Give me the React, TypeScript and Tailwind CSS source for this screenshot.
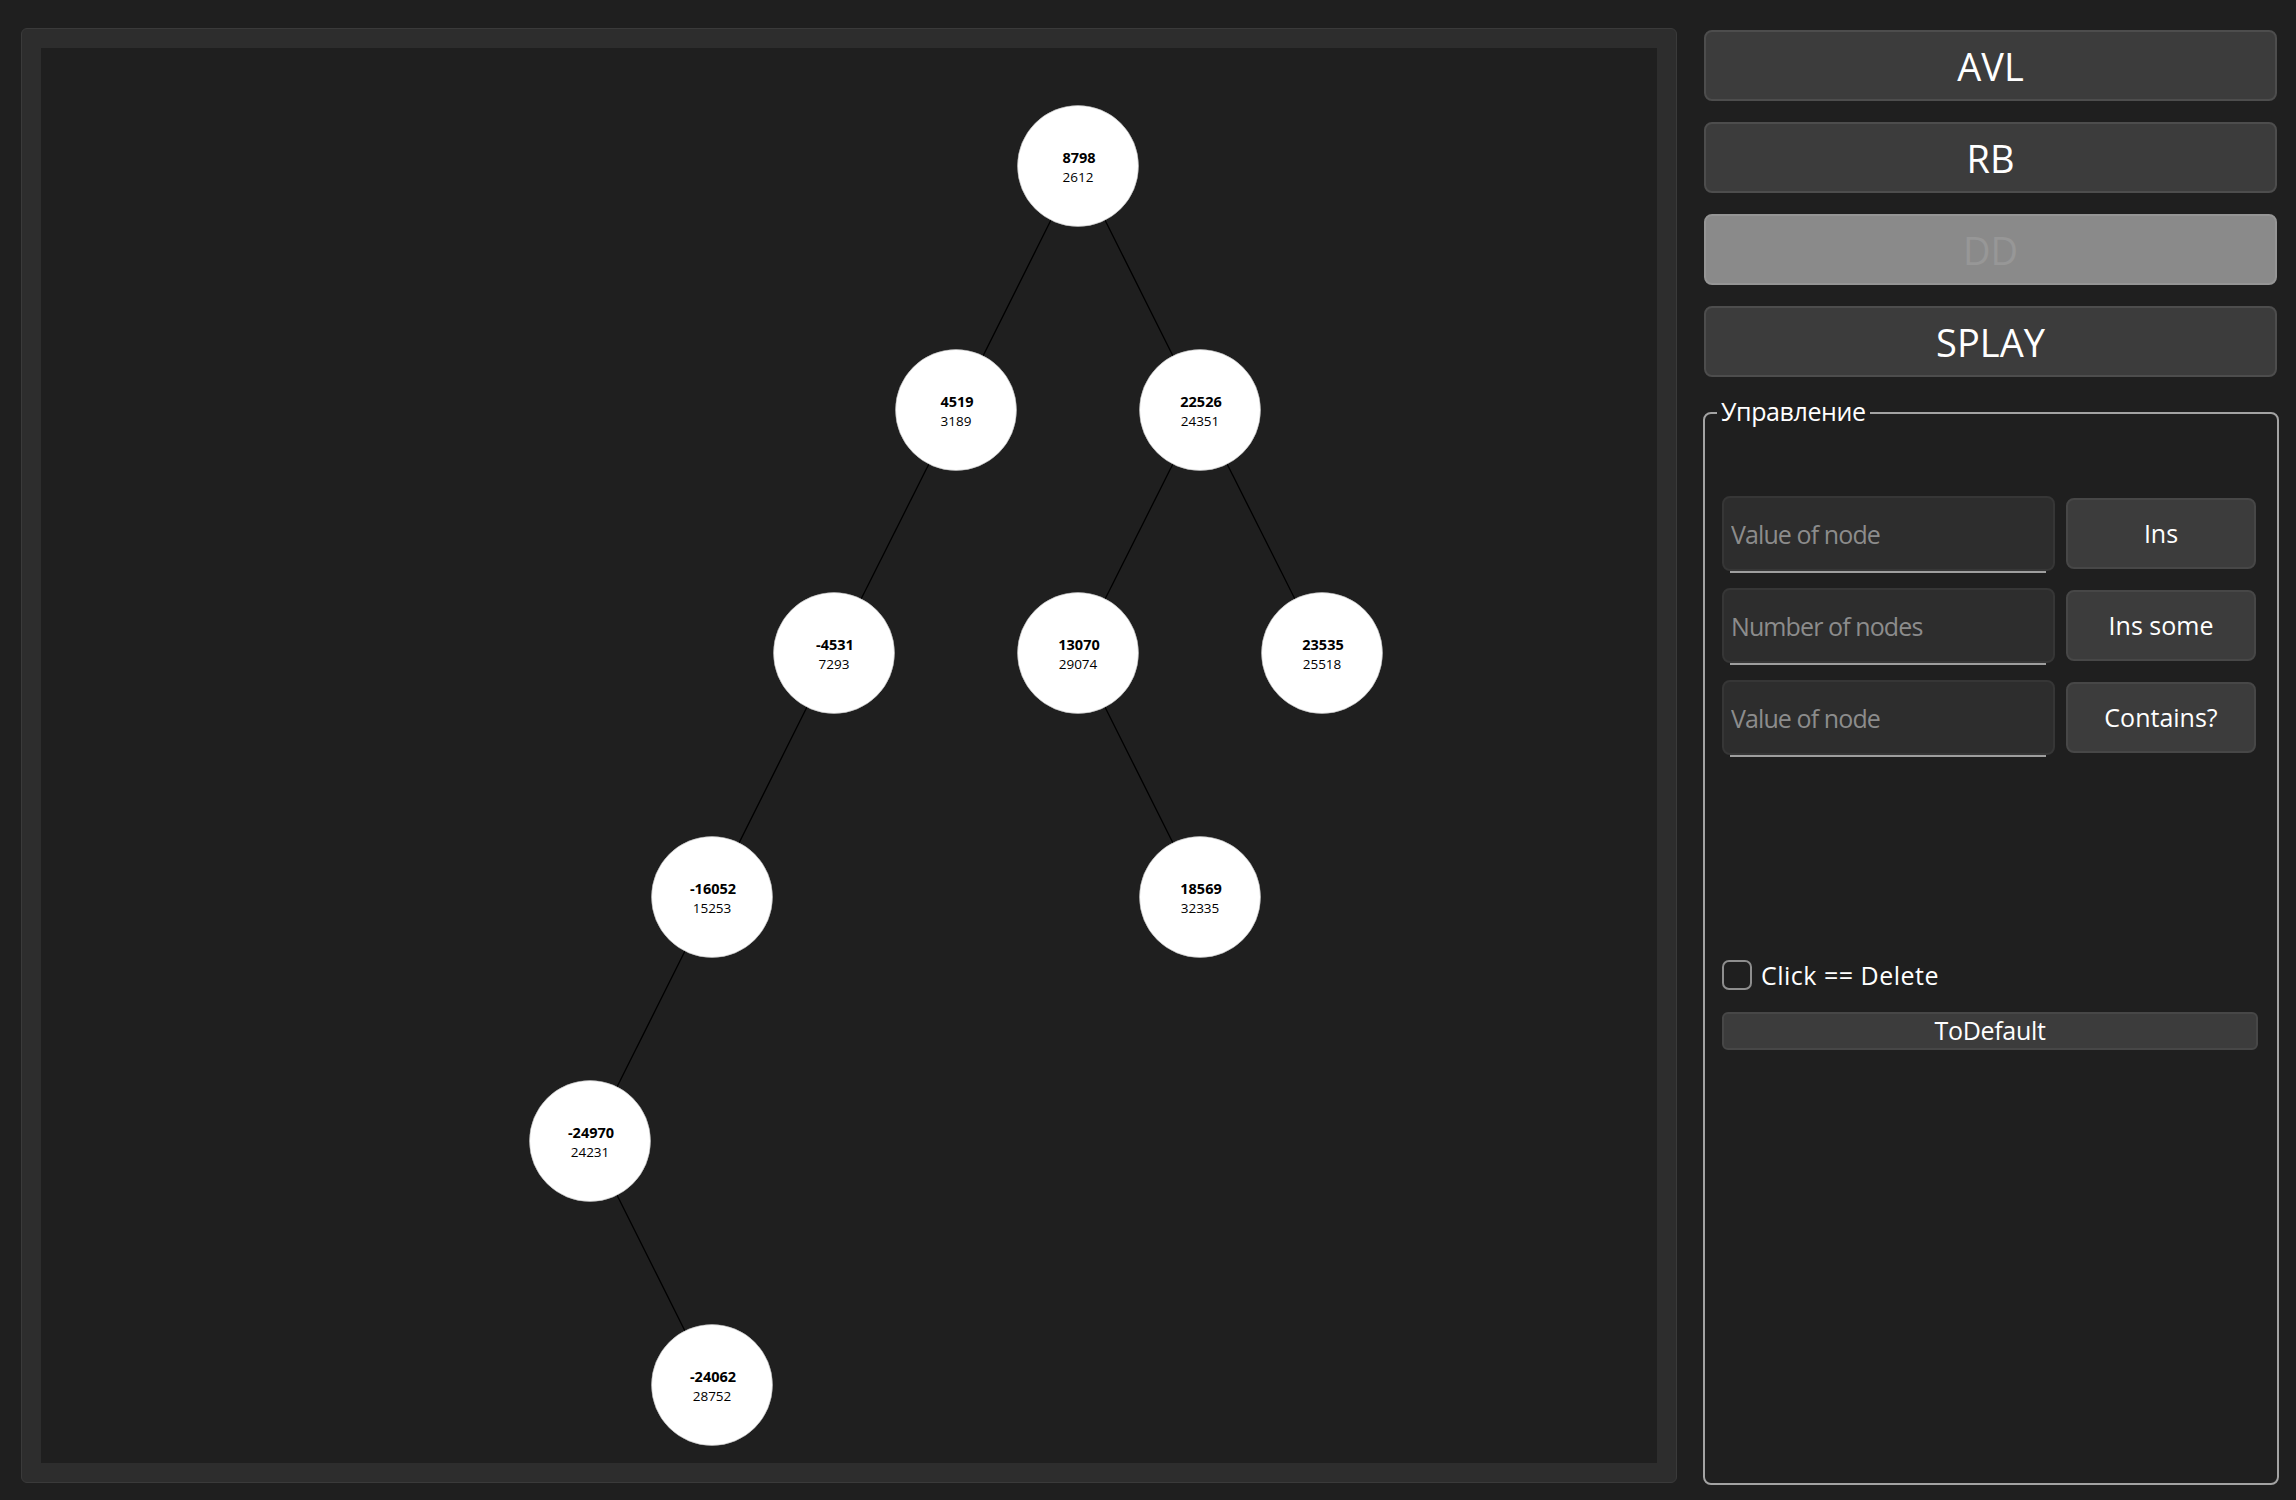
import React from "react";

type N = { id: string; a: string; b: string; x: number; y: number };

const OX = 41;
const OY = 48;

const nodes: N[] = [
  { id: "r", a: "8798", b: "2612", x: 1078, y: 166 },
  { id: "l", a: "4519", b: "3189", x: 956, y: 410 },
  { id: "rr", a: "22526", b: "24351", x: 1200, y: 410 },
  { id: "ll", a: "-4531", b: "7293", x: 834, y: 653 },
  { id: "rl", a: "13070", b: "29074", x: 1078, y: 653 },
  { id: "rrr", a: "23535", b: "25518", x: 1322, y: 653 },
  { id: "lll", a: "-16052", b: "15253", x: 712, y: 897 },
  { id: "rlr", a: "18569", b: "32335", x: 1200, y: 897 },
  { id: "llll", a: "-24970", b: "24231", x: 590, y: 1141 },
  { id: "lllll", a: "-24062", b: "28752", x: 712, y: 1385 },
];

const edges: [string, string][] = [
  ["r", "l"],
  ["r", "rr"],
  ["l", "ll"],
  ["rr", "rl"],
  ["rr", "rrr"],
  ["ll", "lll"],
  ["rl", "rlr"],
  ["lll", "llll"],
  ["llll", "lllll"],
];

const byId = (id: string) => nodes.find((n) => n.id === id)!;

function Tree() {
  return (
    <svg width="1616" height="1415" className="block">
      {edges.map(([p, c]) => {
        const a = byId(p);
        const b = byId(c);
        return (
          <line
            key={p + c}
            x1={a.x - OX}
            y1={a.y - OY}
            x2={b.x - OX}
            y2={b.y - OY}
            stroke="#000"
            strokeWidth={1.3}
          />
        );
      })}
      {nodes.map((n) => (
        <g key={n.id}>
          <circle cx={n.x - OX} cy={n.y - OY} r={60.5} fill="#ffffff" stroke="#bdbdbd" strokeWidth={0.6} />
          <text
            x={n.x - OX + 1}
            y={n.y - OY - 9}
            textAnchor="middle"
            dominantBaseline="central"
            fontFamily="'Open Sans', sans-serif"
            fontWeight={700}
            fontSize={14.5}
            fill="#000"
          >
            {n.a}
          </text>
          <text
            x={n.x - OX}
            y={n.y - OY + 11}
            textAnchor="middle"
            dominantBaseline="central"
            fontFamily="'Open Sans', sans-serif"
            fontWeight={400}
            fontSize={13.5}
            fill="#000"
          >
            {n.b}
          </text>
        </g>
      ))}
    </svg>
  );
}

function BigButton({ label, disabled }: { label: string; disabled?: boolean }) {
  return (
    <div
      className={
        disabled
          ? "ml-[1px] mr-[2px] h-[71px] rounded-[8px] border-2 border-[#959595] bg-[#8a8a8a] flex items-center justify-center text-[38px] text-[#979797]"
          : "ml-[1px] mr-[2px] h-[71px] rounded-[8px] border-2 border-[#4d4d4d] bg-[#3c3c3c] flex items-center justify-center text-[38px] text-white"
      }
    >
      <span className="relative top-[1px]">{label}</span>
    </div>
  );
}

function Row({ placeholder, label }: { placeholder: string; label: string }) {
  return (
    <div className="flex items-center gap-[11px]">
      <div className="relative w-[333px] h-[75px]">
        <input
          placeholder={placeholder}
          className="w-full h-full rounded-[8px] border-2 border-[#363636] bg-[#2d2d2d] pl-[7px] text-[25px] tracking-[-0.9px] text-white placeholder:text-[#8c8c8c] outline-none"
        />
        <div className="absolute left-[8px] right-[9px] bottom-[-2px] h-[2px] bg-[#9e9e9e]" />
      </div>
      <div className="w-[190px] h-[71px] rounded-[8px] border-2 border-[#474747] bg-[#3c3c3c] flex items-center justify-center text-[25px] text-white">
        {label}
      </div>
    </div>
  );
}

export default function App() {
  return (
    <div className="w-[2296px] h-[1500px] bg-[#1f1f1f] flex pl-[21px] pt-[28px] font-['Open_Sans',sans-serif]">
      <div className="w-[1656px] h-[1455px] rounded-[6px] border border-[#3a3a3a] bg-[#2d2d2d] p-[19px] flex">
        <div className="flex-1 bg-[#1f1f1f] overflow-hidden">
          <Tree />
        </div>
      </div>
      <div className="ml-[26px] w-[576px] h-[1457px] flex flex-col pt-[2px]">
        <div className="flex flex-col gap-[21px]">
          <BigButton label="AVL" />
          <BigButton label="RB" />
          <BigButton label="DD" disabled />
          <BigButton label="SPLAY" />
        </div>
        <fieldset className="mt-[17px] flex-1 min-w-0 border-2 border-[#a3a3a3] rounded-[8px] px-[17px]">
          <legend className="ml-[-5px] px-[4px] pb-[4px] text-[25px] leading-[34px] tracking-[-0.4px] text-white">Управление</legend>
          <div className="mt-[64px] flex flex-col gap-[17px]">
            <Row placeholder="Value of node" label="Ins" />
            <Row placeholder="Number of nodes" label="Ins some" />
            <Row placeholder="Value of node" label="Contains?" />
          </div>
          <div className="mt-[205px] flex items-center gap-[9px]">
            <div className="w-[30px] h-[30px] rounded-[7px] border-2 border-[#8e8e8e]" />
            <span className="text-[25px] tracking-[0.5px] text-white leading-[30px]">Click == Delete</span>
          </div>
          <div className="mt-[22px] mr-[2px] h-[38px] rounded-[6px] border-2 border-[#474747] bg-[#3c3c3c] flex items-center justify-center text-[25px] tracking-[-0.3px] text-white">
            ToDefault
          </div>
        </fieldset>
      </div>
    </div>
  );
}
